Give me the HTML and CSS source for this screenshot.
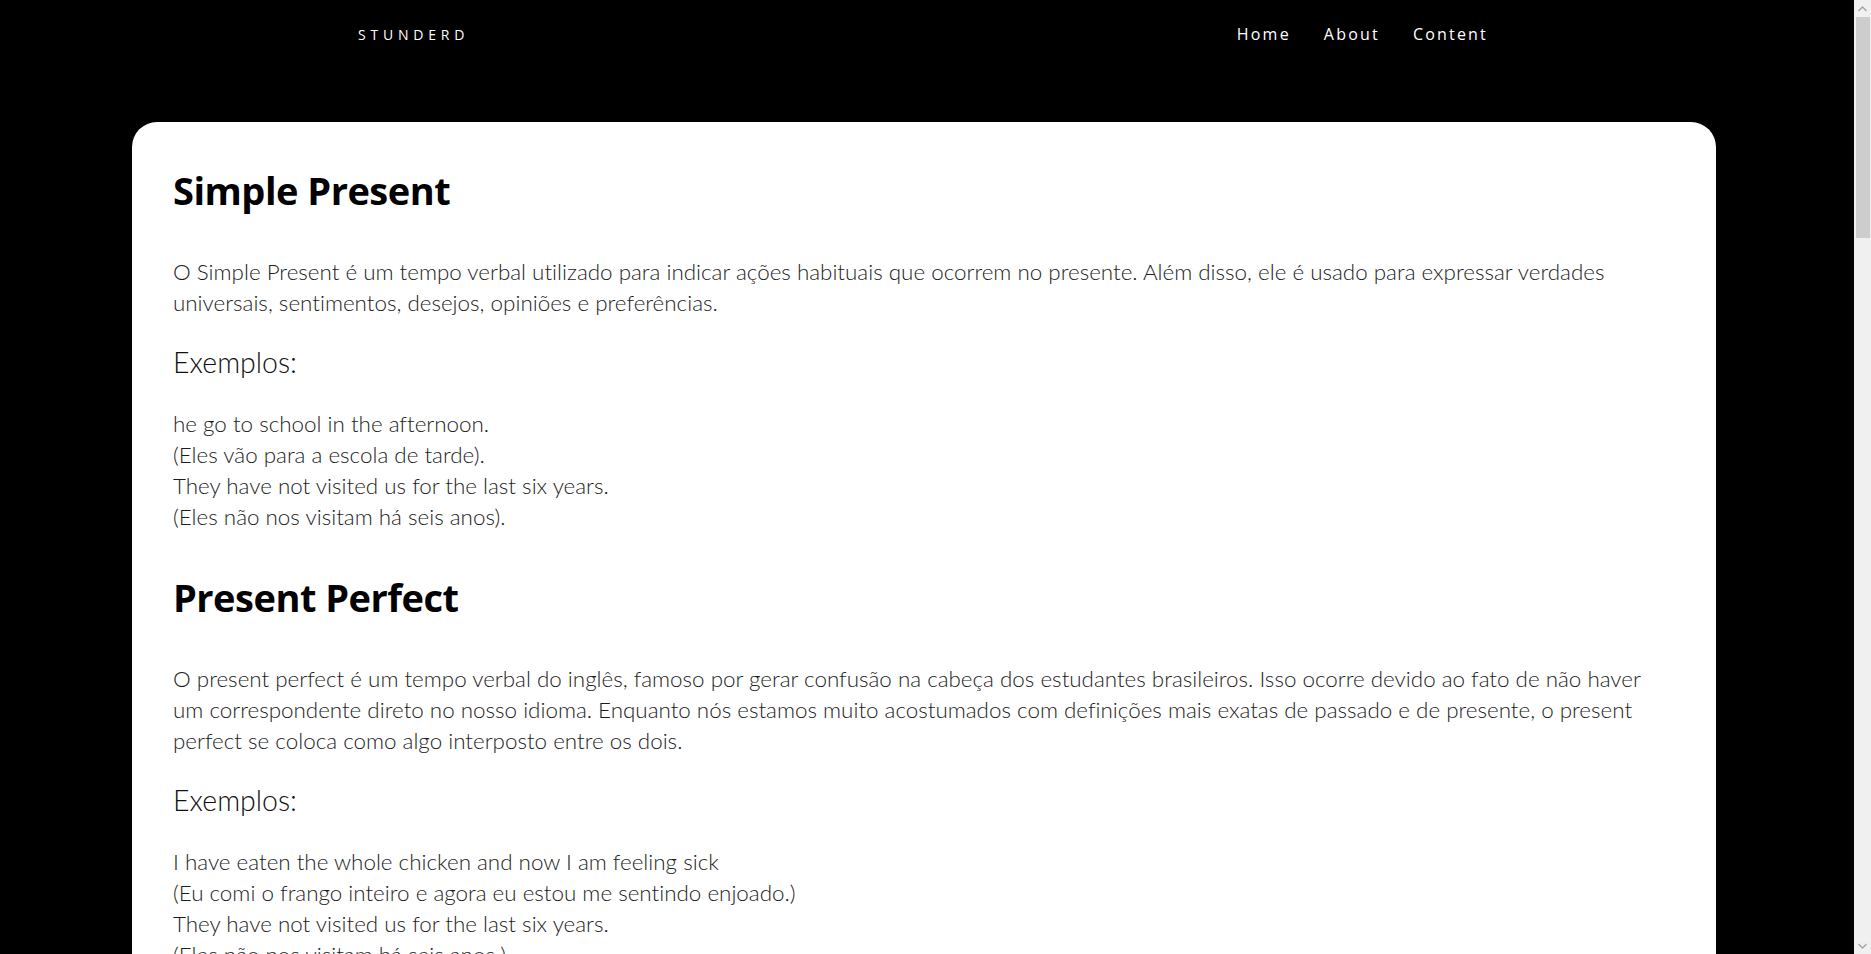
FILE: index.html
```html
<!DOCTYPE html>
<html lang="pt-BR">
<head>
<meta charset="utf-8">
<title>Stunderd</title>
<link rel="stylesheet" href="styles.css">
</head>
<body>
<header class="topbar">
  <div class="topbar-inner">
    <a class="brand" href="#">STUNDERD</a>
    <nav class="nav">
      <a href="#">Home</a>
      <a href="#">About</a>
      <a href="#">Content</a>
    </nav>
  </div>
</header>
<main class="card">
  <section class="tense">
    <h2>Simple Present</h2>
    <p class="lead">O Simple Present é um tempo verbal utilizado para indicar ações habituais que ocorrem no presente. Além disso, ele é usado para expressar verdades universais, sentimentos, desejos, opiniões e preferências.</p>
    <h3>Exemplos:</h3>
    <p class="examples">he go to school in the afternoon.<br>(Eles vão para a escola de tarde).<br>They have not visited us for the last six years.<br>(Eles não nos visitam há seis anos).</p>
  </section>
  <section class="tense">
    <h2>Present Perfect</h2>
    <p class="lead">O present perfect é um tempo verbal do inglês, famoso por gerar confusão na cabeça dos estudantes brasileiros. Isso ocorre devido ao fato de não haver um correspondente direto no nosso idioma. Enquanto nós estamos muito acostumados com definições mais exatas de passado e de presente, o present perfect se coloca como algo interposto entre os dois.</p>
    <h3>Exemplos:</h3>
    <p class="examples">I have eaten the whole chicken and now I am feeling sick<br>(Eu comi o frango inteiro e agora eu estou me sentindo enjoado.)<br>They have not visited us for the last six years.<br>(Eles não nos visitam há seis anos.)</p>
  </section>
</main>
<div class="scrollbar" aria-hidden="true">
  <div class="sb-arrow">
    <svg width="9" height="6" viewBox="0 0 9 6"><path d="M0.5 5 L4.5 1 L8.5 5" fill="none" stroke="#a3a3a3" stroke-width="1.3"/></svg>
  </div>
  <div class="sb-track">
    <div class="sb-thumb"></div>
  </div>
  <div class="sb-arrow">
    <svg width="9" height="6" viewBox="0 0 9 6"><path d="M0.5 1 L4.5 5 L8.5 1" fill="none" stroke="#a3a3a3" stroke-width="1.3"/></svg>
  </div>
</div>
</body>
</html>
```

FILE: styles.css
```css
html, body {
  margin: 0;
  padding: 0;
  background: #000;
}
html {
  overflow: hidden;
}
body {
  margin-right: 17px;
  font-family: "Lato", "Open Sans", sans-serif;
  font-variant-ligatures: none;
  color: #1c1c1c;
}
.topbar {
  height: 68px;
  padding: 0 366px 0 358px;
}
.topbar-inner {
  height: 100%;
  display: flex;
  align-items: center;
  justify-content: space-between;
}
.brand {
  color: #fff;
  text-decoration: none;
  font-family: "Open Sans", sans-serif;
  font-size: 14px;
  letter-spacing: 4.8px;
}
.nav {
  display: flex;
  gap: 33px;
}
.nav a {
  color: #fff;
  text-decoration: none;
  font-family: "Open Sans", sans-serif;
  font-size: 16px;
  letter-spacing: 2.2px;
}
.card {
  background: #fff;
  margin: 54px 138px 0 132px;
  border-radius: 25px;
  padding: 44px 40px 600px 41px;
  min-height: 2600px;
}
.tense + .tense {
  margin-top: 41px;
}
.tense h2 {
  font-family: "Open Sans", sans-serif;
  font-weight: 700;
  font-size: 38px;
  line-height: 48px;
  margin: 0 0 42px;
  color: #000;
  letter-spacing: -0.5px;
}
.tense h3 {
  font-weight: 300;
  font-size: 28.5px;
  line-height: 31px;
  margin: 0 0 30px;
  color: #111;
}
.tense p {
  font-weight: 300;
  font-size: 22.4px;
  line-height: 31px;
  margin: 0;
}
.tense .lead {
  margin-bottom: 29px;
}
.scrollbar {
  position: fixed;
  top: 0;
  right: 0;
  width: 17px;
  height: 100vh;
  background: #f0f0f0;
  display: flex;
  flex-direction: column;
}
.sb-arrow {
  height: 17px;
  display: flex;
  align-items: center;
  justify-content: center;
}
.sb-track {
  flex: 1;
}
.sb-thumb {
  height: 221px;
  margin: 0 1px 0 2px;
  background: #cdcdcd;
}
```
